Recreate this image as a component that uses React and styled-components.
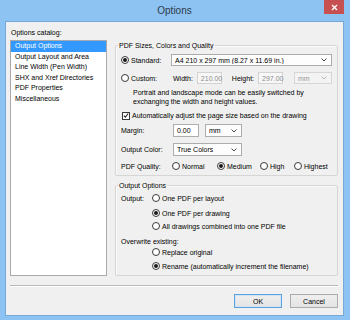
import React from "react";
import styled, { createGlobalStyle } from "styled-components";

const GlobalStyle = createGlobalStyle`
  html, body {
    margin: 0;
    padding: 0;
  }
  body {
    width: 350px;
    height: 320px;
    overflow: hidden;
    font-family: "Liberation Sans", Arial, sans-serif;
    font-size: 7px;
    color: #000;
  }
  * {
    box-sizing: border-box;
  }
`;

const catalog = [
  "Output Options",
  "Output Layout and Area",
  "Line Width (Pen Width)",
  "SHX and Xref Directories",
  "PDF Properties",
  "Miscellaneous",
];

const Chevron = () => (
  <svg width="6" height="4" viewBox="0 0 6 4">
    <path d="M0.5 0.5 L3 3 L5.5 0.5" fill="none" stroke="#333" strokeWidth="0.9" />
  </svg>
);

const Radio = ({ checked, children, w }) => (
  <Option $w={w}>
    <RadioDot $checked={checked} />
    {children && <span>{children}</span>}
  </Option>
);

const Select = ({ children, w, disabled, h }) => (
  <Combo $w={w} $h={h} $disabled={disabled}>
    <ComboText>{children}</ComboText>
    <Chevron />
  </Combo>
);

const App = () => {
  return (
    <>
      <GlobalStyle />
      <Frame>
        <TitleBar>
          <Title>Options</Title>
          <CloseButton>
            <svg width="7" height="7" viewBox="0 0 7 7">
              <path d="M1 1 L6 6 M6 1 L1 6" stroke="#fff" strokeWidth="1.4" />
            </svg>
          </CloseButton>
        </TitleBar>
        <Client>
          <Body>
            <LeftCol>
              <Caption>Options catalog:</Caption>
              <List>
                {catalog.map((item, i) => (
                  <ListItem key={item} $selected={i === 0}>
                    {item}
                  </ListItem>
                ))}
              </List>
            </LeftCol>
            <RightCol>
              <Group>
                <Legend>PDF Sizes, Colors and Quality</Legend>
                <Row $h={12} $mt={4}>
                  <Radio checked w={50}>Standard:</Radio>
                  <Select h={12}>A4 210 x 297 mm (8.27 x 11.69 in.)</Select>
                </Row>
                <Row $h={12} $mt={6}>
                  <Radio w={50}>Custom:</Radio>
                  <Label $ml={2}>Width:</Label>
                  <Input $w={25} $ml={4} $disabled>210.00</Input>
                  <Label $ml={10}>Height:</Label>
                  <Input $w={25} $ml={4} $disabled>297.00</Input>
                  <Spacer $w={11} />
                  <Select h={12} disabled>mm</Select>
                </Row>
                <Note>
                  Portrait and landscape mode can be easily switched by
                  <br />
                  exchanging the width and height values.
                </Note>
                <Row $h={9} $mt={5}>
                  <CheckBox>
                    <svg width="7" height="7" viewBox="0 0 7 7">
                      <path d="M1 3.6 L2.8 5.4 L6 1.2" fill="none" stroke="#222" strokeWidth="1.2" />
                    </svg>
                  </CheckBox>
                  <span>Automatically adjust the page size based on the drawing</span>
                </Row>
                <Row $h={13} $mt={4}>
                  <Label $w={52}>Margin:</Label>
                  <Input $w={26}>0.00</Input>
                  <Spacer $w={6} />
                  <Select w={37} h={13}>mm</Select>
                </Row>
                <Row $h={13} $mt={6}>
                  <Label $w={52}>Output Color:</Label>
                  <Select w={69} h={13}>True Colors</Select>
                </Row>
                <Row $h={10} $mt={5}>
                  <Label $w={51}>PDF Quality:</Label>
                  <Radio w={45}>Normal</Radio>
                  <Radio checked w={43}>Medium</Radio>
                  <Radio w={34}>High</Radio>
                  <Radio>Highest</Radio>
                </Row>
              </Group>
              <Group $mt={5}>
                <Legend>Output Options</Legend>
                <Row $h={10} $mt={3}>
                  <Label $w={31}>Output:</Label>
                  <Radio>One PDF per layout</Radio>
                </Row>
                <Row $h={10} $mt={5} $indent={31}>
                  <Radio checked>One PDF per drawing</Radio>
                </Row>
                <Row $h={10} $mt={3} $indent={31}>
                  <Radio>All drawings combined into one PDF file</Radio>
                </Row>
                <Row $h={10} $mt={5}>
                  <Label>Overwrite existing:</Label>
                </Row>
                <Row $h={10} $mt={1} $indent={31}>
                  <Radio>Replace original</Radio>
                </Row>
                <Row $h={10} $mt={4} $indent={31}>
                  <Radio checked>Rename (automatically increment the filename)</Radio>
                </Row>
              </Group>
            </RightCol>
          </Body>
          <Separator />
          <Footer>
            <Button $default>OK</Button>
            <Button>Cancel</Button>
          </Footer>
        </Client>
      </Frame>
    </>
  );
};

export default App;

const Frame = styled.div`
  width: 350px;
  height: 320px;
  background: #8cc3f3;
  display: flex;
  flex-direction: column;
  padding: 0 6px 4px 5px;
`;

const TitleBar = styled.div`
  height: 21px;
  display: grid;
  grid-template-columns: 1fr auto 1fr;
  align-items: start;
`;

const Title = styled.div`
  grid-column: 2;
  font-size: 10px;
  line-height: 21px;
  color: #2f3a48;
`;

const CloseButton = styled.div`
  grid-column: 3;
  justify-self: end;
  width: 20px;
  height: 14px;
  background: #c75050;
  display: flex;
  align-items: center;
  justify-content: center;
`;

const Client = styled.div`
  flex: 1;
  background: #f0f0f0;
  border: 1px solid #76a8d8;
  padding: 6px 5px 7px 4px;
  display: flex;
  flex-direction: column;
`;

const Body = styled.div`
  display: flex;
  gap: 8px;
`;

const LeftCol = styled.div`
  width: 97px;
  display: flex;
  flex-direction: column;
`;

const Caption = styled.div`
  line-height: 9px;
  margin-bottom: 3px;
  padding-left: 1px;
`;

const List = styled.div`
  height: 236px;
  background: #fff;
  border: 1px solid #a9a9a9;
  padding-top: 0;
`;

const ListItem = styled.div`
  line-height: 10.5px;
  height: 10.5px;
  padding-left: 4px;
  white-space: nowrap;
  background: ${(p) => (p.$selected ? "#3399ff" : "transparent")};
  color: ${(p) => (p.$selected ? "#fff" : "#000")};
`;

const RightCol = styled.div`
  flex: 1;
  display: flex;
  flex-direction: column;
  padding-top: 13px;
`;

const Group = styled.fieldset`
  margin: ${(p) => p.$mt || 0}px 0 0 0;
  padding: 0 5px 4px 5px;
  border: 1px solid #d5d5d5;
  border-radius: 2px;
  min-width: 0;
  box-shadow: inset 1px 1px 0 #fbfbfb;
`;

const Legend = styled.legend`
  padding: 0 1px;
  margin-left: -3px;
  line-height: 9px;
  font-size: 7px;
`;

const Row = styled.div`
  display: flex;
  align-items: center;
  height: ${(p) => p.$h}px;
  margin-top: ${(p) => p.$mt || 0}px;
  padding-left: ${(p) => p.$indent || 0}px;
  white-space: nowrap;
`;

const Option = styled.div`
  display: flex;
  align-items: center;
  gap: 2px;
  width: ${(p) => (p.$w ? `${p.$w}px` : "auto")};
  flex-shrink: 0;
`;

const RadioDot = styled.span`
  width: 8px;
  height: 8px;
  border-radius: 50%;
  border: 1px solid #3a3a3a;
  background: #fff;
  display: flex;
  align-items: center;
  justify-content: center;
  flex-shrink: 0;

  &::after {
    content: "";
    width: 4px;
    height: 4px;
    border-radius: 50%;
    background: ${(p) => (p.$checked ? "#1a1a1a" : "transparent")};
  }
`;

const CheckBox = styled.span`
  width: 8px;
  height: 8px;
  margin: 0 2px 0 1px;
  border: 1px solid #3a3a3a;
  background: #fff;
  display: flex;
  align-items: center;
  justify-content: center;
`;

const Label = styled.span`
  width: ${(p) => (p.$w ? `${p.$w}px` : "auto")};
  margin-left: ${(p) => p.$ml || 0}px;
  flex-shrink: 0;
`;

const Spacer = styled.span`
  width: ${(p) => p.$w}px;
  flex-shrink: 0;
`;

const Combo = styled.div`
  display: flex;
  align-items: center;
  justify-content: space-between;
  height: ${(p) => p.$h}px;
  width: ${(p) => (p.$w ? `${p.$w}px` : "auto")};
  flex: ${(p) => (p.$w ? "0 0 auto" : "1")};
  padding: 0 4px 0 3px;
  background: ${(p) => (p.$disabled ? "#f3f3f3" : "#fdfdfd")};
  border: 1px solid ${(p) => (p.$disabled ? "#d6d6d6" : "#acacac")};
  color: ${(p) => (p.$disabled ? "#9a9a9a" : "#000")};

  svg path {
    stroke: ${(p) => (p.$disabled ? "#b0b0b0" : "#333")};
  }
`;

const ComboText = styled.span`
  overflow: hidden;
`;

const Input = styled.div`
  width: ${(p) => p.$w}px;
  height: 100%;
  margin-left: ${(p) => p.$ml || 0}px;
  flex-shrink: 0;
  display: flex;
  align-items: center;
  padding-left: 3px;
  background: ${(p) => (p.$disabled ? "#f7f7f7" : "#fff")};
  border: 1px solid ${(p) => (p.$disabled ? "#d3d3d3" : "#abadb3")};
  color: ${(p) => (p.$disabled ? "#8d8d8d" : "#000")};
`;

const Note = styled.div`
  margin: 4px 0 0 12px;
  line-height: 9px;
  white-space: nowrap;
`;

const Separator = styled.div`
  margin-top: 9px;
  height: 2px;
  border-top: 1px solid #b9b9b9;
  border-bottom: 1px solid #fff;
`;

const Footer = styled.div`
  margin-top: 7px;
  display: flex;
  justify-content: flex-end;
  gap: 8px;
`;

const Button = styled.div`
  width: 48px;
  height: 14px;
  display: flex;
  align-items: center;
  justify-content: center;
  background: linear-gradient(#efefef, #e3e3e3);
  border: 1px solid ${(p) => (p.$default ? "#5fa0df" : "#acacac")};
  box-shadow: ${(p) => (p.$default ? "inset 0 0 0 1px #cfe4f7" : "none")};
`;
